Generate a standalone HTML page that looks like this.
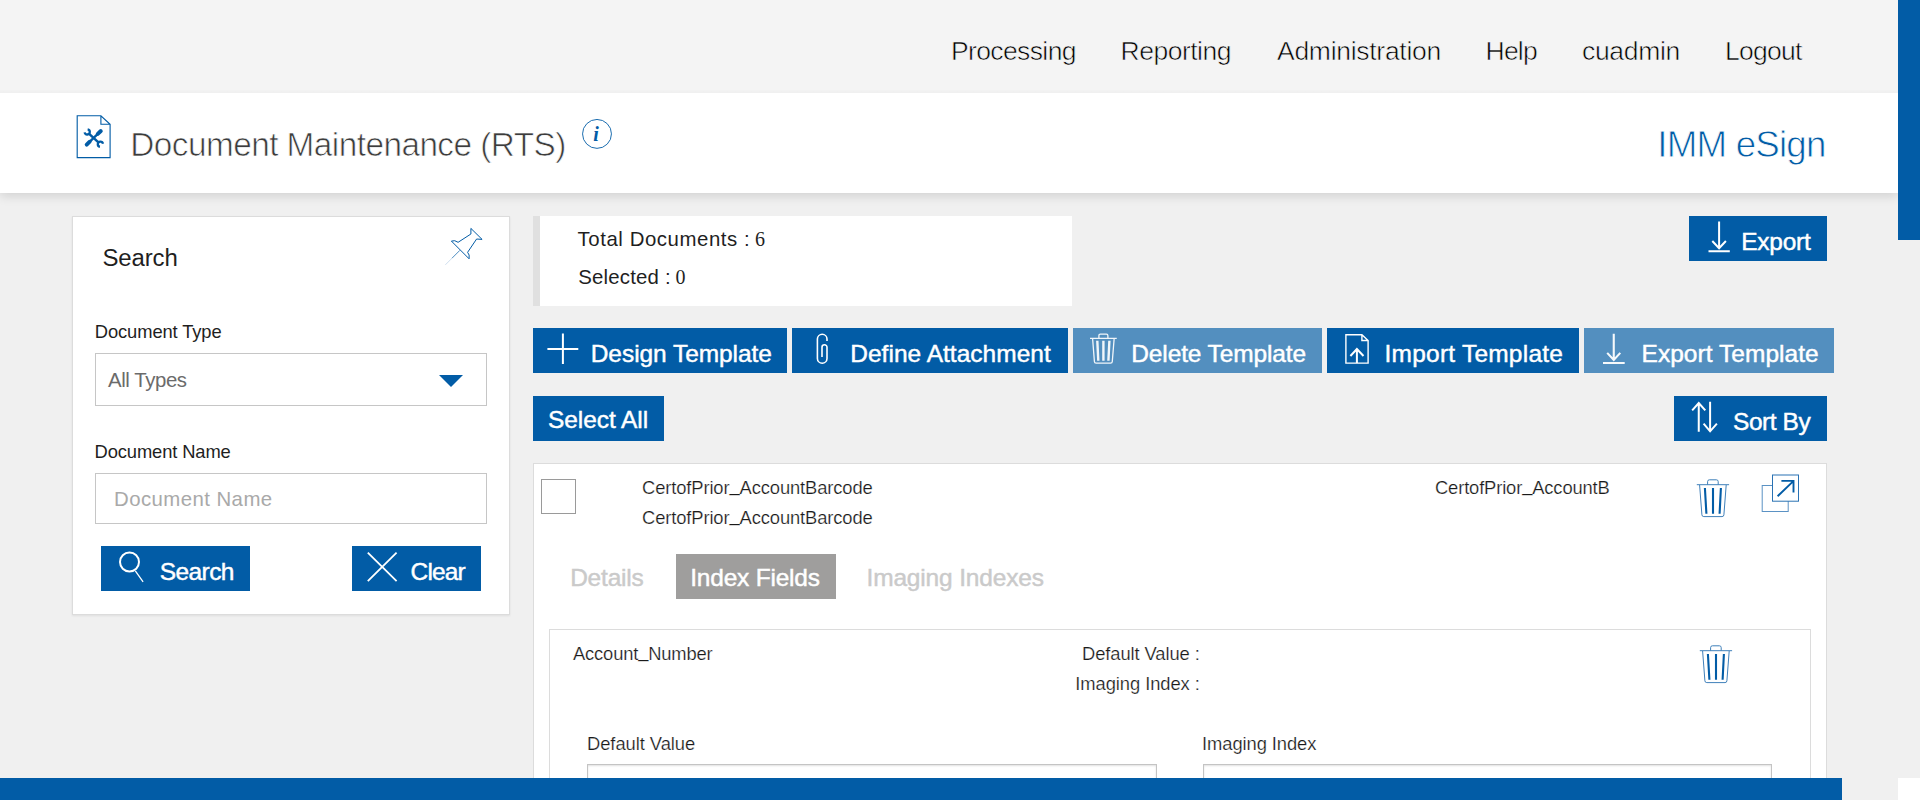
<!DOCTYPE html>
<html lang="en"><head><meta charset="utf-8"><title>Document Maintenance (RTS) - IMM eSign</title>
<style>
*{box-sizing:border-box;margin:0;padding:0}
html,body{width:1920px;height:800px;overflow:hidden}
body{background:#f0f0f0;font-family:"Liberation Sans",sans-serif;position:relative}
.abs{position:absolute}
.t{position:absolute;z-index:3;white-space:nowrap;line-height:1;font-family:"Liberation Sans",sans-serif;font-weight:400}
.nav{color:#000;-webkit-text-stroke:0.6px #f4f4f4}
.title{color:#3c3c3c;-webkit-text-stroke:0.7px #fff}
.brand{color:#025ca6;-webkit-text-stroke:0.8px #fff}
.dark{color:#1f1f1f}
.grey{color:#6b6b6b}
.thin{color:#1a1a1a;-webkit-text-stroke:0.22px #fff}
.ph{color:#a9a9a9}
.btn{color:#fff;-webkit-text-stroke:0.45px #fff}
.tab{color:#cacaca;-webkit-text-stroke:0.45px #cacaca}
.serif{font-family:"Liberation Serif",serif;color:#1f1f1f}
.info{font-family:"Liberation Serif",serif;font-style:italic;font-weight:700;color:#025ca6}
.blue{background:#025ca6}
.dis{opacity:.66}
#nav{left:0;top:0;width:1898px;height:93px;background:linear-gradient(to bottom,#f4f4f4 0,#f4f4f4 89.5px,#f1f1f1 91px,#f0f0f0 92.5px,#f2f2f2 93px);z-index:2}
#titlebar{left:0;top:93px;width:1898px;height:100px;background:#fff;box-shadow:0 3px 10px rgba(0,0,0,.135)}
#vthumb{left:1898px;top:0;width:22px;height:240px}
#hthumb{left:0;top:778px;width:1842px;height:22px;z-index:5}
#htrack{left:1842px;top:778px;width:56px;height:22px;background:#f0f0f0;z-index:5}
#corner{left:1898px;top:778px;width:22px;height:22px;background:#fff;z-index:5}
#search{left:72px;top:216px;width:438px;height:399px;background:#fff;border:1px solid #dcdcdc;box-shadow:0 1px 2px rgba(0,0,0,.075)}
.field{background:#fff;border:1px solid #c6c6c6}
#stats{left:533px;top:216px;width:539px;height:90px;background:#fff;border-left:7px solid #e0e0e0}
#card{left:533px;top:463px;width:1294px;height:340px;background:#fff;border:1px solid #dcdcdc}
#inner{left:549px;top:629px;width:1262px;height:180px;background:#fff;border:1px solid #dcdcdc}
#chk{left:541px;top:479px;width:35px;height:35px;background:#fff;border:1px solid #9a9a9a}
#tabsel{left:676px;top:554px;width:160px;height:45px;background:#9f9e9d}
.inp{background:#fff;border:1px solid #c4c4c4;box-shadow:inset 0 1px 2px rgba(0,0,0,.12)}
.us{position:relative;top:-3px}
svg{position:absolute;overflow:visible}
</style></head>
<body>
<nav>
<div id="nav" class="abs"></div>
<a class="t nav" style="left:951.00px;top:38.00px;font-size:26.52px;letter-spacing:-0.630px;">Processing</a>
<a class="t nav" style="left:1120.50px;top:38.00px;font-size:26.52px;letter-spacing:-0.497px;">Reporting</a>
<a class="t nav" style="left:1277.00px;top:38.00px;font-size:26.52px;letter-spacing:-0.289px;">Administration</a>
<a class="t nav" style="left:1485.50px;top:38.00px;font-size:26.52px;letter-spacing:-0.762px;">Help</a>
<a class="t nav" style="left:1582.00px;top:38.00px;font-size:26.52px;letter-spacing:-0.329px;">cuadmin</a>
<a class="t nav" style="left:1725.00px;top:38.00px;font-size:26.52px;letter-spacing:-0.747px;">Logout</a>
</nav>
<header>
<div id="titlebar" class="abs"></div>
<svg style="left:70px;top:110px" width="50" height="54" viewBox="70 110 50 54" fill="none" stroke="#025ca6">
<path d="M77.2,115.8 H100.9 L110.1,124.3 V157.6 H77.2 Z M100.9,115.8 V124.3 H110.1" stroke-width="1.12" stroke-linejoin="miter"/>
<path d="M88,143.3 L99.6,132.2" stroke-width="2.4" stroke-linecap="butt"/>
<path d="M86.7,144.6 L89.7,141.7" stroke-width="3.9" stroke-linecap="round"/>
<path d="M97.8,133.9 L100.8,131" stroke-width="3.9" stroke-linecap="round"/>
<path d="M88.6,133.3 L99,142.8" stroke-width="2.5" stroke-linecap="butt"/>
<path d="M87.65,129.34 A2.6,2.6 0 1 1 84.64,132.35" stroke-width="2.3"/>
<path d="M99.95,146.76 A2.6,2.6 0 1 1 102.96,143.75" stroke-width="2.3"/>
</svg>
<h1 class="t title" style="left:130.30px;top:128.00px;font-size:33.35px;letter-spacing:-0.540px;">Document Maintenance (RTS)</h1>
<svg style="left:580px;top:117px" width="34" height="34" viewBox="580 117 34 34" fill="none" stroke="#025ca6">
<circle cx="597" cy="133.9" r="14.45" stroke-width="0.9"/>
</svg>
<span class="t info" style="left:593.30px;top:124.00px;font-size:20px;">i</span>
<div class="t brand" style="left:1657.30px;top:127.00px;font-size:36.72px;letter-spacing:-0.796px;">IMM eSign</div>
</header>
<div id="vthumb" class="abs blue"></div>
<aside>
<div id="search" class="abs"></div>
<h2 class="t dark" style="left:102.40px;top:246.00px;font-size:23.97px;letter-spacing:-0.123px;">Search</h2>
<svg style="left:440px;top:222px" width="50" height="50" viewBox="440 222 50 50" fill="none" stroke="#025ca6">
<path d="M470.9,228.4 L482.1,239.4 L476.6,239 L467.6,252.3 Q469.9,254.6 469.1,258.8 L451.4,241.1 Q454.6,239.7 458.1,242.3 L470.9,234 Z" stroke-width="1" stroke-linejoin="round"/>
<path d="M459.9,250.3 L452,258.2" stroke-width="0.7"/>
<path d="M452,258.2 L445.4,264.8" stroke-width="0.45" stroke="#8fb4d6"/>
</svg>
<label class="t dark" style="left:94.80px;top:323.00px;font-size:18.36px;letter-spacing:-0.114px;">Document Type</label>
<div class="abs field" style="left:95px;top:353px;width:392px;height:53px;"></div>
<span class="t grey" style="left:108.10px;top:370.00px;font-size:20.4px;letter-spacing:-0.429px;">All Types</span>
<svg style="left:439px;top:375px" width="24" height="12" viewBox="0 0 24 12"><path d="M0,0 H24 L12,12 Z" fill="#025ca6"/></svg>
<label class="t dark" style="left:94.50px;top:443.00px;font-size:18.36px;letter-spacing:-0.120px;">Document Name</label>
<div class="abs field" style="left:95px;top:473px;width:392px;height:51px;"></div>
<span class="t ph" style="left:114.00px;top:489.00px;font-size:20.4px;letter-spacing:0.429px;">Document Name</span>
<div class="abs blue" style="left:101px;top:546px;width:149px;height:45px;"></div>
<svg style="left:115px;top:548px" width="34" height="40" viewBox="115 548 34 40" fill="none" stroke="#fff">
<circle cx="129.5" cy="562" r="9.5" stroke-width="2"/>
<path d="M135.3,570.9 L143.1,581.8" stroke-width="1.3"/>
</svg>
<span class="t btn" style="left:159.65px;top:560.00px;font-size:24.48px;letter-spacing:-0.544px;">Search</span>
<div class="abs blue" style="left:352px;top:546px;width:129px;height:45px;"></div>
<svg style="left:362px;top:548px" width="40" height="40" viewBox="362 548 40 40" fill="none" stroke="#fff" stroke-width="1.8">
<path d="M367.8,552.6 L396.6,581.2 M396.6,552.6 L367.8,581.2"/>
</svg>
<span class="t btn" style="left:410.55px;top:560.00px;font-size:24.48px;letter-spacing:-0.831px;">Clear</span>
</aside>
<main>
<div id="stats" class="abs"></div>
<span class="t dark" style="left:577.50px;top:229.00px;font-size:20.4px;letter-spacing:0.567px;">Total Documents :</span>
<span class="t serif" style="left:754.90px;top:229.00px;font-size:20px;">6</span>
<span class="t dark" style="left:578.20px;top:267.00px;font-size:20.4px;letter-spacing:0.198px;">Selected :</span>
<span class="t serif" style="left:675.60px;top:267.00px;font-size:20px;">0</span>
<div class="abs blue" style="left:1689px;top:216px;width:138px;height:45px;"></div>
<svg style="left:1704px;top:218px" width="32" height="40" viewBox="1704 218 32 40" fill="none" stroke="#fff" stroke-width="2">
<path d="M1719.1,221.5 V248 M1712.3,241 L1719.1,248.2 L1725.9,241 M1708.5,251.2 H1729.8"/>
</svg>
<span class="t btn" style="left:1741.15px;top:230.00px;font-size:24.48px;letter-spacing:-0.214px;">Export</span>
<div class="abs blue" style="left:533px;top:328px;width:254px;height:45px;"></div>
<svg style="left:545px;top:330px" width="36" height="38" viewBox="545 330 36 38" fill="none" stroke="#fff" stroke-width="2">
<path d="M547.4,349 H578.3 M562.9,333.5 V364"/>
</svg>
<span class="t btn" style="left:590.75px;top:342.00px;font-size:24.48px;letter-spacing:-0.046px;">Design Template</span>
<div class="abs blue" style="left:792px;top:328px;width:276px;height:45px;"></div>
<svg style="left:812px;top:330px" width="20" height="38" viewBox="812 330 20 38" fill="none" stroke="#fff" stroke-width="1.6">
<path d="M827,340.9 V339.1 A4.8,4.8 0 0 0 817.4,339.1 V358.4 A4.8,4.8 0 0 0 827,358.4 V347.3 A2.5,2.5 0 0 0 822,347.3 V357"/>
</svg>
<span class="t btn" style="left:850.25px;top:342.00px;font-size:24.48px;letter-spacing:0.032px;">Define Attachment</span>
<div class="abs blue dis" style="left:1073px;top:328px;width:249px;height:45px;"></div>
<svg class="dis" style="left:1088px;top:331px;opacity:.92" width="32" height="36" viewBox="-2 -2.5 32 36" fill="none" stroke="#fff" stroke-width="1.3">
<path d="M0,4.8 H26.75 M8.9,4.8 V2.2 Q8.9,0.7 10.4,0.7 H16.4 Q17.9,0.7 17.9,2.2 V4.8 M2.6,5 L4.4,28 Q4.5,29.6 6.1,29.6 H20.6 Q22.2,29.6 22.3,28 L24.15,5"/>
<path d="M7.3,7.2 L8.3,27.3 M13.4,7.2 V27.3 M19.4,7.2 L18.4,27.3" stroke-width="2.4"/>
</svg>
<span class="t btn" style="left:1131.25px;top:342.00px;font-size:24.48px;letter-spacing:-0.104px;">Delete Template</span>
<div class="abs blue" style="left:1327px;top:328px;width:252px;height:45px;"></div>
<svg style="left:1342px;top:330px" width="30" height="38" viewBox="1342 330 30 38" fill="none" stroke="#fff">
<path d="M1345.9,334.7 H1361.9 L1368.1,340.5 V363.1 H1345.9 Z M1361.9,334.7 V340.5 H1368.1" stroke-width="1.4"/>
<path d="M1356.9,349.2 V363 M1350.4,356 L1356.9,349 L1363.5,356" stroke-width="2"/>
</svg>
<span class="t btn" style="left:1384.50px;top:342.00px;font-size:24.48px;letter-spacing:0.245px;">Import Template</span>
<div class="abs blue dis" style="left:1584px;top:328px;width:250px;height:45px;"></div>
<svg style="left:1600px;top:330px;opacity:.95" width="30" height="38" viewBox="1600 330 30 38" fill="none" stroke="#fff" stroke-width="2.1">
<path d="M1613.75,333.8 V359.6 M1607.2,352.9 L1613.75,359.9 L1620.3,352.9 M1603,363 H1624.7"/>
</svg>
<span class="t btn" style="left:1641.50px;top:342.00px;font-size:24.48px;letter-spacing:0.058px;">Export Template</span>
<div class="abs blue" style="left:533px;top:396px;width:131px;height:45px;"></div>
<span class="t btn" style="left:548.00px;top:408.00px;font-size:24.48px;letter-spacing:-0.062px;">Select All</span>
<div class="abs blue" style="left:1674px;top:396px;width:153px;height:45px;"></div>
<svg style="left:1688px;top:398px" width="34" height="38" viewBox="1688 398 34 38" fill="none" stroke="#fff" stroke-width="2">
<path d="M1698.75,403.2 V431.8 M1692.2,410.4 L1698.75,403 L1705.3,410.4 M1710.1,401.8 V431.2 M1703.6,423.7 L1710.1,431.3 L1716.9,423.7"/>
</svg>
<span class="t btn" style="left:1733.00px;top:410.00px;font-size:24.48px;letter-spacing:-0.416px;">Sort By</span>
<section>
<div id="card" class="abs"></div>
<div id="chk" class="abs"></div>
<span class="t thin" style="left:642.00px;top:479.00px;font-size:18.36px;letter-spacing:-0.119px;">CertofPrior<span class="us">_</span>AccountBarcode</span>
<span class="t thin" style="left:642.00px;top:509.00px;font-size:18.36px;letter-spacing:-0.119px;">CertofPrior<span class="us">_</span>AccountBarcode</span>
<span class="t thin" style="left:1435.00px;top:479.00px;font-size:18.36px;letter-spacing:-0.148px;">CertofPrior<span class="us">_</span>AccountB</span>
<svg style="left:1695px;top:477px" width="38" height="44" viewBox="1695 477 38 44" fill="none" stroke="#3f80ba" stroke-width="1">
<path d="M1696.8,484.7 H1729.1 M1707.6,484.7 V481.6 Q1707.6,479.8 1709.4,479.8 H1716.4 Q1718.2,479.8 1718.2,481.6 V484.7 M1699.6,485 L1701.9,514.8 Q1702,516.6 1703.8,516.6 H1722 Q1723.8,516.6 1723.9,514.8 L1726.2,485"/>
<path d="M1704.9,488 L1706.4,513.7 M1713,488 V513.7 M1720.9,488 L1719.6,513.7" stroke="#025ca6" stroke-width="2.1"/>
</svg>
<svg style="left:1758px;top:472px" width="46" height="44" viewBox="1758 472 46 44" fill="none" stroke="#2a72b3" stroke-width="1">
<rect x="1762.2" y="485.5" width="26" height="26" stroke="#5b92c4"/>
<rect x="1772.5" y="475" width="26" height="26.2" fill="#fff"/>
<path d="M1777.6,496.2 L1793.6,480.9 M1781.4,480.9 H1794.4 M1793.5,480 V492.6" stroke="#025ca6" stroke-width="1.9"/>
</svg>
<span class="t tab" style="left:570.15px;top:566.00px;font-size:24.48px;letter-spacing:-0.193px;">Details</span>
<div id="tabsel" class="abs"></div>
<span class="t btn" style="left:690.25px;top:566.00px;font-size:24.48px;letter-spacing:-0.199px;">Index Fields</span>
<span class="t tab" style="left:866.50px;top:566.00px;font-size:24.48px;letter-spacing:-0.147px;">Imaging Indexes</span>
<div id="inner" class="abs"></div>
<span class="t thin" style="left:573.00px;top:645.00px;font-size:18.36px;letter-spacing:-0.172px;">Account<span class="us">_</span>Number</span>
<span class="t thin" style="left:1082.00px;top:645.00px;font-size:18.36px;letter-spacing:-0.087px;">Default Value :</span>
<span class="t thin" style="left:1075.25px;top:675.00px;font-size:18.36px;letter-spacing:-0.066px;">Imaging Index :</span>
<svg style="left:1698px;top:642.6px" width="38" height="44" viewBox="1695 477 38 44" fill="none" stroke="#3f80ba" stroke-width="1">
<path d="M1696.8,484.7 H1729.1 M1707.6,484.7 V481.6 Q1707.6,479.8 1709.4,479.8 H1716.4 Q1718.2,479.8 1718.2,481.6 V484.7 M1699.6,485 L1701.9,514.8 Q1702,516.6 1703.8,516.6 H1722 Q1723.8,516.6 1723.9,514.8 L1726.2,485"/>
<path d="M1704.9,488 L1706.4,513.7 M1713,488 V513.7 M1720.9,488 L1719.6,513.7" stroke="#025ca6" stroke-width="2.1"/>
</svg>
<label class="t thin" style="left:587.00px;top:735.00px;font-size:18.36px;letter-spacing:-0.055px;">Default Value</label>
<div class="abs inp" style="left:587px;top:764px;width:570px;height:40px;"></div>
<label class="t thin" style="left:1202.00px;top:735.00px;font-size:18.36px;letter-spacing:-0.075px;">Imaging Index</label>
<div class="abs inp" style="left:1203px;top:764px;width:569px;height:40px;"></div>
</section>
</main>
<div id="hthumb" class="abs blue"></div>
<div id="htrack" class="abs"></div>
<div id="corner" class="abs"></div>
</body></html>
